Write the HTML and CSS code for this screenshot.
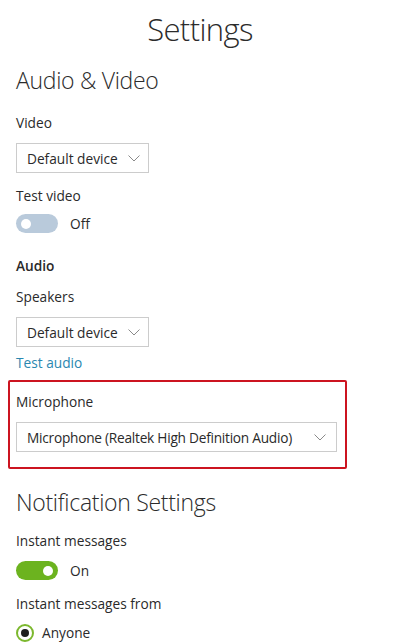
FILE: index.html
```html
<!DOCTYPE html>
<html>
<head>
<meta charset="utf-8">
<link rel="stylesheet" href="styles.css">
</head>
<body>
<div class="page">
  <h1 class="title">Settings</h1>
  <h2 class="section">Audio &amp; Video</h2>

  <div class="label first">Video</div>
  <div class="select"><span class="value">Default device</span><svg class="chev" viewBox="0 0 12 7"><path d="M0.5 0.5 L6 6 L11.5 0.5" fill="none" stroke="#8a8a8a" stroke-width="1"/></svg></div>

  <div class="label">Test video</div>
  <div class="toggle-row"><span class="toggle off"><span class="knob"></span></span><span class="toggle-text">Off</span></div>

  <div class="label bold">Audio</div>
  <div class="label tight">Speakers</div>
  <div class="select"><span class="value">Default device</span><svg class="chev" viewBox="0 0 12 7"><path d="M0.5 0.5 L6 6 L11.5 0.5" fill="none" stroke="#8a8a8a" stroke-width="1"/></svg></div>
  <div class="link">Test audio</div>

  <div class="highlight">
    <div class="label">Microphone</div>
    <div class="select wide"><span class="value">Microphone (Realtek High Definition Audio)</span><svg class="chev" viewBox="0 0 12 7"><path d="M0.5 0.5 L6 6 L11.5 0.5" fill="none" stroke="#8a8a8a" stroke-width="1"/></svg></div>
  </div>

  <h2 class="section notif">Notification Settings</h2>
  <div class="label first notif-first">Instant messages</div>
  <div class="toggle-row on-row"><span class="toggle on"><span class="knob"></span></span><span class="toggle-text">On</span></div>
  <div class="label from">Instant messages from</div>
  <div class="radio-row"><span class="radio"><span class="dot"></span></span><span class="radio-text">Anyone</span></div>
</div>
</body>
</html>
```
FILE: styles.css
```css
html, body {
  margin: 0;
  padding: 0;
  background: #ffffff;
}
body {
  font-family: "Open Sans", "Noto Sans", sans-serif;
  color: #2a2a2a;
  width: 400px;
  height: 644px;
  overflow: hidden;
}
.page {
  padding: 0 16px;
  display: flex;
  flex-direction: column;
  align-items: flex-start;
}
.title {
  align-self: stretch;
  text-align: center;
  font-size: 31px;
  letter-spacing: -0.6px;
  font-weight: 300;
  margin: 7px 0 0 0;
  line-height: 44px;
  color: #2b2b2b;
}
.section {
  font-size: 23px;
  letter-spacing: -0.3px;
  font-weight: 300;
  margin: 13px 0 0 0;
  line-height: 32px;
  color: #2b2b2b;
}
.section.notif {
  margin-top: 17px;
}
.label {
  font-size: 13.7px;
  line-height: 20px;
  margin-top: 13px;
}
.label.first {
  margin-top: 17px;
}
.label.first.notif-first {
  margin-top: 13px;
}
.label.from {
  margin-top: 14px;
}
.label.bold {
  font-weight: 600;
  margin-top: 23px;
}
.label.tight {
  margin-top: 11px;
}
.select {
  margin-top: 10px;
  height: 30px;
  box-sizing: border-box;
  border: 1px solid #cccccc;
  padding: 0 8px 0 10px;
  display: flex;
  align-items: center;
  gap: 10px;
  font-size: 13.7px;
  white-space: nowrap;
}
.value {
  white-space: nowrap;
}
.chev {
  width: 12px;
  height: 7px;
  flex: none;
}
.toggle-row {
  margin-top: 8px;
  display: flex;
  align-items: center;
  gap: 12px;
}
.toggle-row.on-row {
  margin-top: 10px;
}
.toggle {
  width: 42px;
  height: 19px;
  border-radius: 10px;
  display: flex;
  align-items: center;
  padding: 0 5px;
  box-sizing: border-box;
}
.toggle.off {
  background: #b9cadb;
  justify-content: flex-start;
}
.toggle.on {
  background: #6cb31f;
  justify-content: flex-end;
}
.knob {
  width: 10px;
  height: 10px;
  border-radius: 50%;
  background: #ffffff;
}
.toggle-text {
  font-size: 13.7px;
}
.link {
  margin-top: 6px;
  font-size: 13.7px;
  line-height: 20px;
  color: #2a87b0;
}
.highlight {
  margin: 7px 0 0 -8px;
  width: 339px;
  height: 89px;
  box-sizing: border-box;
  border: 2px solid #cc1420;
  border-radius: 2px;
  padding: 0 0 0 6px;
  display: flex;
  flex-direction: column;
  align-items: flex-start;
}
.highlight .label {
  margin-top: 10px;
}
.highlight .select {
  margin-top: 10px;
  width: 321px;
  justify-content: space-between;
  gap: 6px;
  padding-right: 10px;
}
.highlight .select .value {
  letter-spacing: -0.25px;
}
.radio-row {
  margin-top: 9px;
  display: flex;
  align-items: center;
  gap: 8px;
}
.radio {
  width: 18px;
  height: 18px;
  border: 2px solid #7cb82e;
  border-radius: 50%;
  box-sizing: border-box;
  display: flex;
  align-items: center;
  justify-content: center;
}
.dot {
  width: 8px;
  height: 8px;
  border-radius: 50%;
  background: #1e1e1e;
}
.radio-text {
  font-size: 13.7px;
}
```
